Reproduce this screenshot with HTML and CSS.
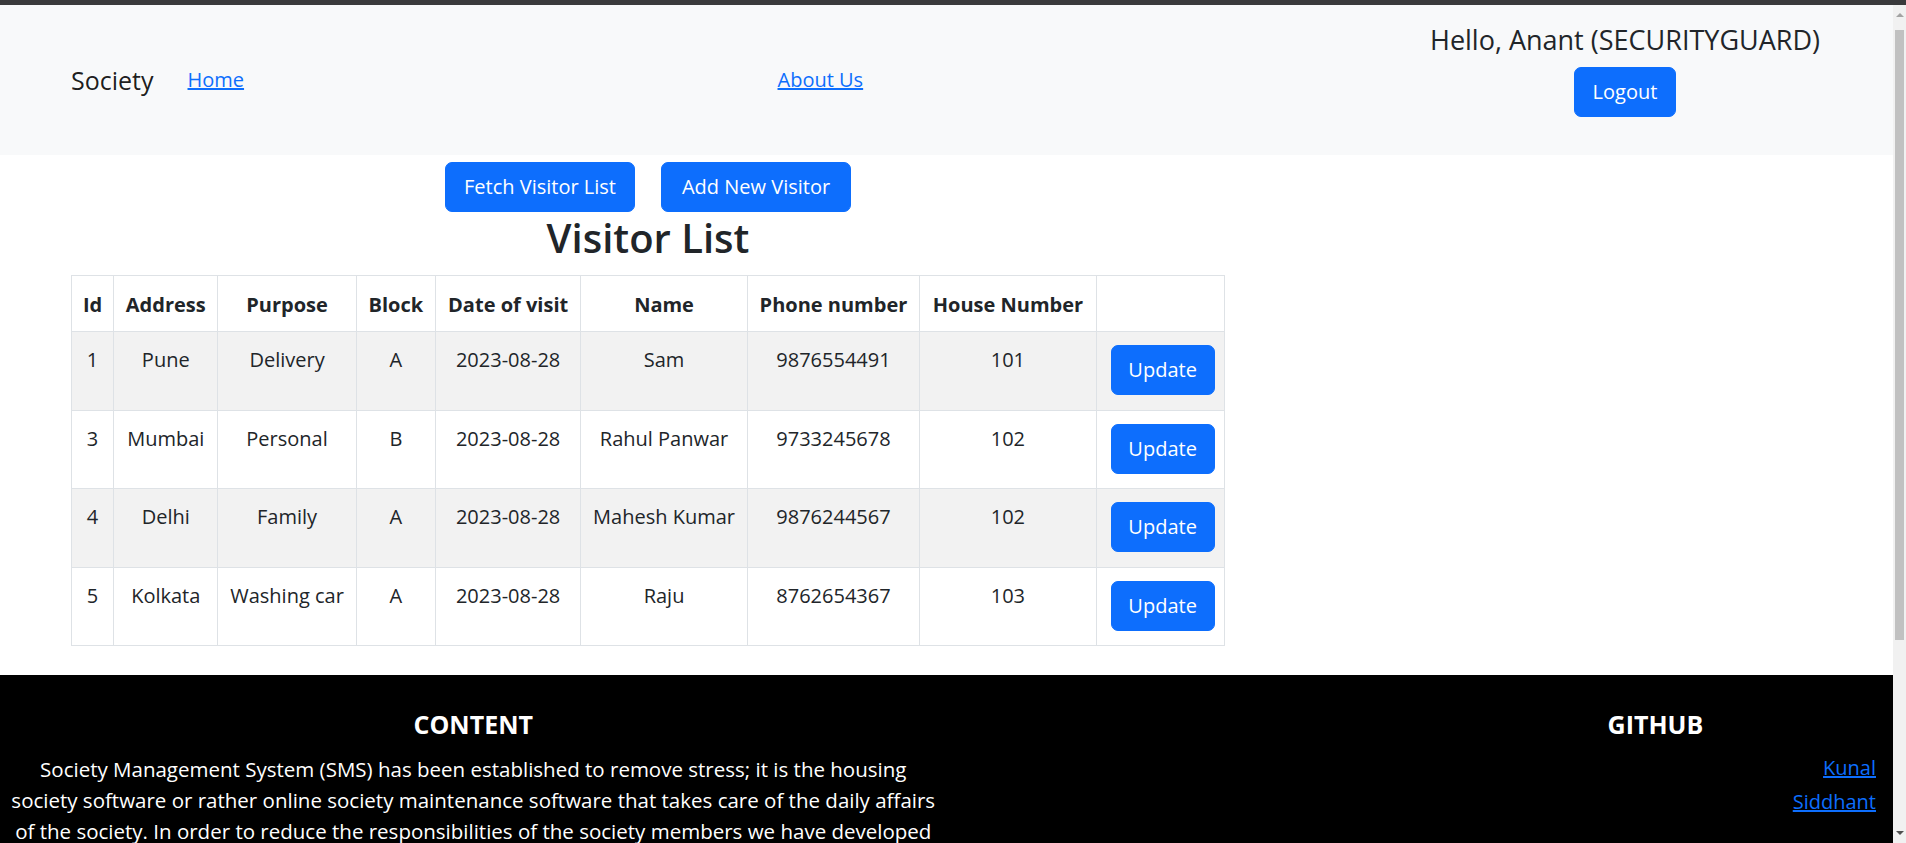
FILE: index.html
```html
<!DOCTYPE html>
<html lang="en">
<head>
<meta charset="utf-8">
<title>Society - Visitor List</title>
<link rel="stylesheet" href="styles.css">
</head>
<body>
<div class="window">
  <div class="chrome-top"></div>
  <div class="viewport">
    <div class="page">
      <nav class="navbar">
        <a class="brand" href="#">Society</a>
        <ul class="nav-links">
          <li class="nav-item"><a href="#">Home</a></li>
          <li class="nav-item"><a href="#">About Us</a></li>
        </ul>
        <div class="user-box">
          <h4 class="greeting">Hello, Anant (SECURITYGUARD)</h4>
          <button class="btn btn-logout">Logout</button>
        </div>
      </nav>

      <main class="content">
        <div class="actions">
          <button class="btn btn-wide">Fetch Visitor List</button>
          <button class="btn btn-wide">Add New Visitor</button>
        </div>
        <h2 class="title">Visitor List</h2>
        <table class="visitor-table">
          <colgroup>
            <col class="w-id"><col class="w-address"><col class="w-purpose"><col class="w-block"><col class="w-date"><col class="w-name"><col class="w-phone"><col class="w-house"><col class="w-action">
          </colgroup>
          <thead>
            <tr><th>Id</th><th>Address</th><th>Purpose</th><th>Block</th><th>Date of visit</th><th>Name</th><th>Phone number</th><th>House Number</th><th></th></tr>
          </thead>
          <tbody>
            <tr><td>1</td><td>Pune</td><td>Delivery</td><td>A</td><td>2023-08-28</td><td>Sam</td><td>9876554491</td><td>101</td><td class="action-cell"><button class="btn btn-update">Update</button></td></tr>
            <tr><td>3</td><td>Mumbai</td><td>Personal</td><td>B</td><td>2023-08-28</td><td>Rahul Panwar</td><td>9733245678</td><td>102</td><td class="action-cell"><button class="btn btn-update">Update</button></td></tr>
            <tr><td>4</td><td>Delhi</td><td>Family</td><td>A</td><td>2023-08-28</td><td>Mahesh Kumar</td><td>9876244567</td><td>102</td><td class="action-cell"><button class="btn btn-update">Update</button></td></tr>
            <tr><td>5</td><td>Kolkata</td><td>Washing car</td><td>A</td><td>2023-08-28</td><td>Raju</td><td>8762654367</td><td>103</td><td class="action-cell"><button class="btn btn-update">Update</button></td></tr>
          </tbody>
        </table>
      </main>

      <footer class="footer">
        <div class="footer-col footer-content">
          <h5 class="footer-title">CONTENT</h5>
          <p class="footer-text">Society Management System (SMS) has been established to remove stress; it is the housing<br>society software or rather online society maintenance software that takes care of the daily affairs<br>of the society. In order to reduce the responsibilities of the society members we have developed</p>
        </div>
        <div class="footer-col"></div>
        <div class="footer-col footer-github">
          <h5 class="footer-title">GITHUB</h5>
          <a class="gh-link" href="#">Kunal</a>
          <a class="gh-link" href="#">Siddhant</a>
        </div>
      </footer>
    </div>
    <div class="vscroll">
      <div class="arrow arrow-up"></div>
      <div class="track"><div class="thumb"></div></div>
      <div class="arrow arrow-down"></div>
    </div>
  </div>
</div>
</body>
</html>
```

FILE: styles.css
```css
* { box-sizing: border-box; }

html, body {
  margin: 0;
  padding: 0;
  overflow: hidden;
}

body {
  font-family: "Open Sans", "Noto Sans", "Liberation Sans", sans-serif;
  font-size: 20px;
  line-height: 30px;
  color: #212529;
  background: #ffffff;
}

.window {
  display: flex;
  flex-direction: column;
  height: 100vh;
}

.chrome-top {
  height: 5px;
  flex: 0 0 5px;
  background: #3a3a3c;
}

.viewport {
  flex: 1;
  display: flex;
  min-height: 0;
}

.page {
  flex: 1;
  overflow: hidden;
  min-width: 0;
}

/* fake window scrollbar */
.vscroll {
  width: 13px;
  flex: 0 0 13px;
  background: #f1f1f1;
  display: flex;
  flex-direction: column;
}
.arrow {
  height: 20px;
  flex: 0 0 20px;
  display: flex;
  justify-content: center;
  align-items: center;
}
.arrow::before {
  content: "";
  width: 0;
  height: 0;
  border-left: 4px solid transparent;
  border-right: 4px solid transparent;
}
.arrow-up::before { border-bottom: 4px solid #a3a3a3; }
.arrow-down::before { border-top: 4px solid #505050; }
.track {
  flex: 1;
  padding: 5px 2px 0;
}
.thumb {
  height: 610px;
  background: #c1c1c1;
}

/* navbar */
.navbar {
  height: 150px;
  background: #f8f9fa;
  display: flex;
  align-items: center;
  padding-left: 71px;
}
.brand {
  font-size: 25px;
  line-height: 30px;
  color: rgba(0, 0, 0, 0.9);
  text-decoration: none;
  margin-right: 34px;
}
.nav-links {
  list-style: none;
  margin: 0;
  padding: 0;
  display: flex;
}
.nav-item {
  width: 590px;
}
.nav-item a {
  color: #0d6efd;
  text-decoration: underline;
  font-size: 20px;
}
.user-box {
  margin-left: auto;
  margin-right: 68px;
  width: 400px;
  align-self: flex-start;
  margin-top: 18px;
  text-align: center;
  display: flex;
  flex-direction: column;
  align-items: center;
}
.greeting {
  margin: 0 0 10px;
  font-size: 27px;
  line-height: 34px;
  font-weight: 500;
  white-space: nowrap;
}

/* buttons */
.btn {
  font-family: inherit;
  font-size: 20px;
  line-height: 30px;
  color: #ffffff;
  background: #0d6efd;
  border: 1px solid #0d6efd;
  border-radius: 7px;
  height: 50px;
  padding: 0;
  white-space: nowrap;
  cursor: pointer;
}
.btn-logout { width: 102px; }
.btn-wide { width: 190px; }
.btn-update { width: 104px; margin: 4px; display: block; }

/* content */
.content {
  margin-left: 71px;
  width: 1154px;
}
.actions {
  display: flex;
  justify-content: center;
  gap: 26px;
  margin-top: 7px;
}
.title {
  margin: 1px 0 12px;
  text-align: center;
  font-size: 40px;
  line-height: 50px;
  font-weight: 600;
}

.visitor-table {
  width: 1154px;
  table-layout: fixed;
  border-collapse: collapse;
  border: 1px solid #dee2e6;
}
.w-id { width: 42px; }
.w-address { width: 104px; }
.w-purpose { width: 138px; }
.w-block { width: 79px; }
.w-date { width: 145px; }
.w-name { width: 166px; }
.w-phone { width: 172px; }
.w-house { width: 176px; }
.w-action { width: 128px; }

.visitor-table th,
.visitor-table td {
  border: 1px solid #dee2e6;
  text-align: center;
  white-space: nowrap;
  vertical-align: top;
}
.visitor-table th {
  padding: 14px 4px 11px;
  font-weight: 700;
  height: 56px;
}
.visitor-table td {
  padding: 13px 4px 0;
}
.visitor-table td.action-cell {
  padding: 9px 10px 10.5px;
}
.visitor-table tbody tr:nth-child(odd) td {
  background: #f2f2f2;
}

/* footer */
.footer {
  margin-top: 29px;
  background: #000000;
  color: #ffffff;
  display: grid;
  grid-template-columns: 6fr 3fr 3fr;
  padding-top: 34px;
  min-height: 300px;
}
.footer-col {
  padding: 0 15px;
}
.footer-content {
  padding: 0 10px;
}
.footer-title {
  margin: 0 0 15px;
  font-size: 25px;
  line-height: 30px;
  font-weight: 700;
  text-align: center;
}
.footer-text {
  margin: 0;
  text-align: center;
  font-size: 20.5px;
  line-height: 31px;
  white-space: nowrap;
}
.footer-github {
  display: flex;
  flex-direction: column;
  align-items: flex-end;
  padding-right: 17px;
}
.footer-github .footer-title {
  align-self: stretch;
  margin-bottom: 12px;
}
.gh-link {
  color: #0d6efd;
  text-decoration: underline;
  line-height: 34px;
}
```
